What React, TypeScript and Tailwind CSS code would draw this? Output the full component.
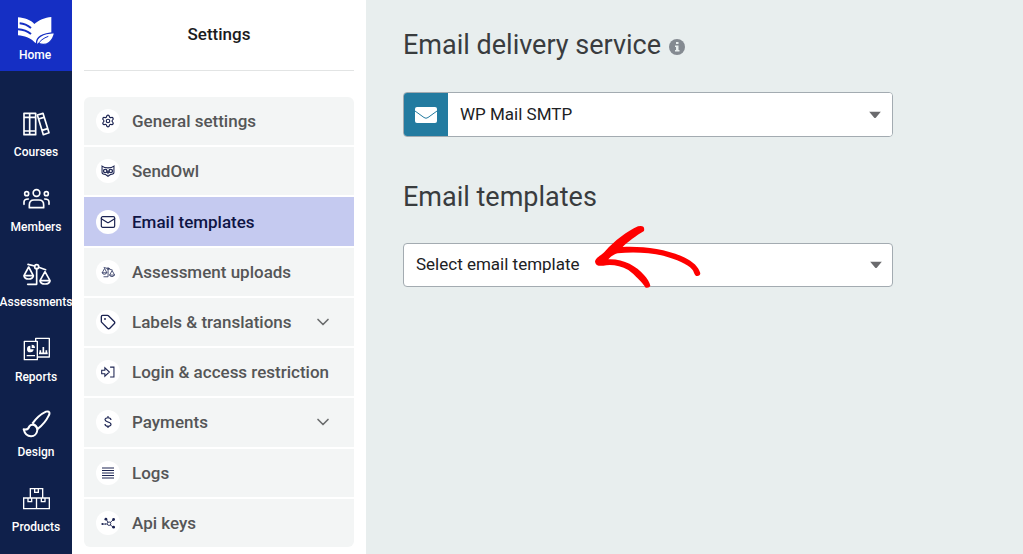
import React from 'react';
import { ChevronDown, Mail, Settings, Tag } from 'lucide-react';

const HomeLogo = () => (
  <svg viewBox="54 46 114 90" className="h-[30px] w-[38px]" aria-hidden="true">
    <path fill="#fff" d="M57 50C76 52 96 58 106 70C118 59 138 51 157 49V102C132 102 116 112 110 128L106 124C95 112 76 106 57 104Z" />
    <path fill="none" stroke="#152fc4" strokeWidth="6" d="M62 68C74 69 86 74 96 82M57 86C74 87 86 92 96 100" />
    <path fill="#fff" stroke="#152fc4" strokeWidth="4" d="M113 132C109 110 130 98 167 96C162 122 144 137 120 129Z" />
    <path fill="none" stroke="#152fc4" strokeWidth="3" d="M115 134C122 120 134 112 148 107" />
  </svg>
);

const CoursesIcon = () => (
  <svg viewBox="66 334 87 78" className="h-[26px] w-[29px]" fill="none" stroke="#fff" strokeWidth="5" strokeLinejoin="round" aria-hidden="true">
    <path d="M72 341H107V405H72ZM89 341V405M72 353H107M72 394H107" />
    <path d="M112 346L129 341L147 399L130 405ZM115 358L132 353M126 392L143 387" />
  </svg>
);

const MembersIcon = () => (
  <svg viewBox="66 49 87 78" className="h-[26px] w-[29px]" fill="none" stroke="#fff" strokeWidth="5" strokeLinejoin="round" strokeLinecap="round" aria-hidden="true">
    <circle cx="109.500" cy="70" r="10" />
    <circle cx="80" cy="72" r="6" />
    <circle cx="139" cy="72" r="6" />
    <path d="M88 114V106Q88 91 102 91H117Q131 91 131 106V114ZM72 104V97Q72 88 85 88M147 104V97Q147 88 134 88" />
  </svg>
);

interface ScalesIconProps {
  className: string;
}

const ScalesIcon = ({ className }: ScalesIconProps) => (
  <svg viewBox="66 272 87 78" className={className} fill="none" stroke="currentColor" strokeWidth="5" strokeLinejoin="round" strokeLinecap="round" aria-hidden="true">
    <circle cx="110" cy="289" r="6" />
    <path d="M84 282L104 287M116 291L137 298M110 295V342H83" />
    <path d="M86 290L72 316H100ZM72 317Q74 326 86 326Q98 326 100 317" />
    <path d="M135 304L120 331H150ZM120 332Q122 341 135 341Q148 341 150 332" />
  </svg>
);

const ReportsIcon = () => (
  <svg viewBox="66 47 87 78" className="h-[26px] w-[29px]" fill="none" stroke="#fff" strokeWidth="4" strokeLinejoin="round" aria-hidden="true">
    <path d="M73 63H112V118H73ZM107 62V54H148V110H113M80 106H105" />
    <path fill="#fff" stroke="none" d="M91 76A10 10 0 1 0 101 87H91ZM95 73V83H105A10 10 0 0 0 95 73Z" />
    <path strokeWidth="5" d="M121 90V99M130 80V99M139 90V99M117 99H143" />
  </svg>
);

const DesignIcon = () => (
  <svg viewBox="66 268 87 84" className="h-[28px] w-[29px]" fill="none" stroke="#fff" strokeWidth="6" strokeLinejoin="round" aria-hidden="true">
    <path d="M97 309C109 292 123 280 138 273C148 270 151 276 146 285C139 300 127 314 112 326M97 309Q109 313 112 326" />
    <path d="M71 326Q84 329 88 317C95 307 112 314 112 328C110 352 78 355 71 326Z" />
  </svg>
);

const ProductsIcon = () => (
  <svg viewBox="66 47 87 78" className="h-[26px] w-[29px]" fill="none" stroke="#fff" strokeWidth="4" aria-hidden="true">
    <path d="M91 83V55H128V83M71 83H148V115H71ZM109.500 83V115" />
    <path d="M104 55V66H115V55M84 83V94H95V83M124 83V94H135V83" />
  </svg>
);

const OwlIcon = () => (
  <svg viewBox="0 0 40 34" className="h-3 w-3.5" fill="none" stroke="currentColor" strokeWidth="3" aria-hidden="true">
    <path d="M3 3Q9 8 20 8Q31 8 37 3V21Q37 26 27 27L20 32L13 27Q3 26 3 21Z" />
    <circle cx="12" cy="17" r="5" fill="currentColor" />
    <circle cx="28" cy="17" r="5" fill="currentColor" />
    <path d="M16 13L20 24L24 13" />
    <circle cx="12" cy="17" r="1.500" stroke="#fff" />
    <circle cx="28" cy="17" r="1.500" stroke="#fff" />
  </svg>
);

const LoginIcon = () => (
  <svg viewBox="0 0 40 34" className="h-3 w-3.5" fill="none" stroke="currentColor" strokeWidth="3" aria-hidden="true">
    <path d="M2 12H11V5L24 17L11 29V22H2ZM26 3H37V31H26" />
  </svg>
);

const DollarIcon = () => (
  <svg viewBox="0 0 24 36" className="h-3 w-2" fill="none" stroke="currentColor" strokeWidth="3.500" aria-hidden="true">
    <path d="M12 0V5M12 31V36M21 12C21 3 3 3 3 11.500C3 19 21 17 21 25C21 33 3 33 3 24" />
  </svg>
);

const LogsIcon = () => (
  <svg viewBox="0 0 12 12" className="size-3" stroke="currentColor" strokeWidth="1.200" aria-hidden="true">
    <path d="M0 1H12M0 3.500H12M0 6H12M0 8.500H12M0 11H12" />
  </svg>
);

const ApiIcon = () => (
  <svg viewBox="0 0 40 32" className="h-3 w-3.5" fill="none" stroke="currentColor" strokeWidth="2.500" aria-hidden="true">
    <path d="M4 19H15M15 5L20 15M26 15L36 6M26 21L35 28" />
    <circle cx="23" cy="18" r="5" />
    <g fill="currentColor" stroke="none">
      <circle cx="4" cy="19" r="3" />
      <circle cx="14" cy="5" r="4" />
      <circle cx="14" cy="19" r="2" />
      <circle cx="36" cy="6" r="4" />
      <circle cx="36" cy="28" r="4" />
    </g>
  </svg>
);

const Caret = () => (
  <svg viewBox="0 0 12 7" className="pointer-events-none absolute top-1/2 right-[11px] h-[7px] w-3 -translate-y-1/2" aria-hidden="true">
    <path fill="#6a6a6d" d="M0 0H12L7 6Q6 7 5 6Z" />
  </svg>
);

// Hand-drawn pointer lying over the template drop-down
const PointerArrow = () => (
  <svg viewBox="600 150 345 216" className="pointer-events-none absolute -top-[23px] left-[187px] h-[72px] w-[115px]" aria-hidden="true">
    <path
      fill="#fe0000"
      d="M615 275C617 262 634 257 646 243C672 214 712 183 744 169Q766 164 762 183C740 196 712 216 698 231C760 228 832 238 882 262C910 275 926 292 931 310Q930 320 918 318C911 312 912 304 906 298C893 281 860 269 820 257C775 247 725 245 683 250C668 254 660 262 655 268C700 266 738 288 762 315C771 325 779 337 781 347Q778 355 767 353C756 337 735 315 715 300C690 285 660 283 640 287Q617 290 615 275Z"
    />
  </svg>
);

const navItems = [
  { label: 'Courses', icon: <CoursesIcon /> },
  { label: 'Members', icon: <MembersIcon /> },
  { label: 'Assessments', icon: <ScalesIcon className="h-[26px] w-[29px]" /> },
  { label: 'Reports', icon: <ReportsIcon /> },
  { label: 'Design', icon: <DesignIcon /> },
  { label: 'Products', icon: <ProductsIcon /> },
];

interface SettingsItem {
  label: string;
  icon: React.ReactNode;
  active?: boolean;
  expandable?: boolean;
}

const settingsItems: SettingsItem[] = [
  { label: 'General settings', icon: <Settings className="size-3.5" /> },
  { label: 'SendOwl', icon: <OwlIcon /> },
  { label: 'Email templates', icon: <Mail className="size-4" strokeWidth={1.8} />, active: true },
  { label: 'Assessment uploads', icon: <ScalesIcon className="h-3 w-3.5" /> },
  { label: 'Labels & translations', icon: <Tag className="size-4" />, expandable: true },
  { label: 'Login & access restriction', icon: <LoginIcon /> },
  { label: 'Payments', icon: <DollarIcon />, expandable: true },
  { label: 'Logs', icon: <LogsIcon /> },
  { label: 'Api keys', icon: <ApiIcon /> },
];

function Sidebar() {
  return (
    <nav className="w-[72px] shrink-0 bg-[#0f204b] text-xs font-medium text-white">
      <a href="#" className="flex h-[71px] flex-col items-center gap-px bg-[#152fc4] pt-4">
        <HomeLogo />
        <span className="pr-0.5">Home</span>
      </a>
      <div className="flex flex-col pt-[39px]">
        {navItems.map((item) => (
          <a key={item.label} href="#" className="flex h-[75px] flex-col items-center gap-1.5">
            <span className="flex h-7 items-center">{item.icon}</span>
            <span>{item.label}</span>
          </a>
        ))}
      </div>
    </nav>
  );
}

function SettingsMenu() {
  return (
    <aside className="w-[294px] shrink-0 bg-white px-3 text-[17px] leading-6 font-medium">
      <h2 className="border-b border-[#e2e4e4] pt-[22px] pb-6 text-center text-[#1b1b1d]">Settings</h2>
      <ul className="mt-[26px] flex min-h-[450px] flex-col gap-0.5 overflow-hidden rounded-md">
        {settingsItems.map((item) => (
          <li key={item.label} className="flex flex-1">
            <a
              href="#"
              className={
                item.active
                  ? 'flex flex-1 items-center gap-3 bg-[#c5caf0] pl-3 text-[#0f1545]'
                  : 'flex flex-1 items-center gap-3 bg-[#f3f5f5] pl-3 text-[#555657]'
              }
            >
              <span className="flex size-6 items-center justify-center rounded-full bg-white text-[#1c2452]">
                {item.icon}
              </span>
              <span className="whitespace-nowrap">{item.label}</span>
              {item.expandable && <ChevronDown className="mr-[21px] ml-auto size-5 text-[#6b6c6d]" />}
            </a>
          </li>
        ))}
      </ul>
    </aside>
  );
}

export default function App() {
  return (
    <div className="flex min-h-screen bg-[#e8eeee] font-['Roboto',sans-serif]">
      <Sidebar />
      <SettingsMenu />
      <main className="min-w-0 flex-1 px-[37px] pt-[29px] text-[17px] text-[#202124]">
        <div className="flex items-center gap-2">
          <h1 id="service-label" className="text-[27px] leading-8 text-[#393c3e]">Email delivery service</h1>
          <button type="button" aria-label="About email delivery service" className="mt-1">
            <svg viewBox="0 0 16 16" className="size-4" aria-hidden="true">
              <circle cx="8" cy="8" r="8" fill="#848a91" />
              <path fill="#e8eeee" d="M7 3H9.500V5H7ZM6 6.500H9.500V11H10.500V12.500H6V11H7V8H6Z" />
            </svg>
          </button>
        </div>
        <div className="relative mt-[31px] flex h-[45px] max-w-[490px] overflow-hidden rounded border border-[#a3abb1] bg-white">
          <span className="flex w-11 shrink-0 items-center justify-center bg-[#237ba0]">
            <svg viewBox="0 0 22 16" className="h-4 w-[22px]" aria-hidden="true">
              <rect width="22" height="16" rx="2" fill="#fff" />
              <path fill="none" stroke="#237ba0" d="M0 4L9 10.500Q11 12 13 10.500L22 4" />
            </svg>
          </span>
          <select aria-labelledby="service-label" className="w-full appearance-none bg-white pl-3">
            <option>WP Mail SMTP</option>
          </select>
          <Caret />
        </div>
        <h2 id="template-label" className="mt-11 text-[27px] leading-8 text-[#393c3e]">Email templates</h2>
        <div className="relative mt-[30px] max-w-[490px]">
          <select
            aria-labelledby="template-label"
            className="h-11 w-full appearance-none rounded border border-[#a3abb1] bg-white pl-3"
          >
            <option>Select email template</option>
          </select>
          <Caret />
          <PointerArrow />
        </div>
      </main>
    </div>
  );
}
